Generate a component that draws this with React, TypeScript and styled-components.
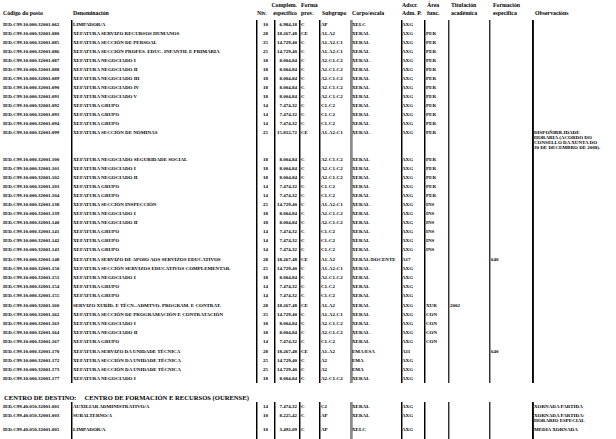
import React from 'react';
import styled, { createGlobalStyle } from 'styled-components';

const GlobalStyle = createGlobalStyle`
    * {
        box-sizing: border-box;
    }
    body {
        margin: 0;
        background: #fff;
        color: #000;
        font-family: 'Liberation Serif', 'Times New Roman', serif;
    }
`;

type Align = 'left' | 'center' | 'right';

// column widths, text alignment and the rule on the left of each column
// (rule: border width, edge: the softer pixel drawn just inside it)
const columns: { width: number; rule: number; colour: string; edge: string; align: Align; pad: string }[] = [
    { width: 71, rule: 0, colour: '#000', edge: 'transparent', align: 'left', pad: '0 0 0 3px' },
    { width: 185, rule: 1, colour: '#000', edge: '#8a8a8a', align: 'left', pad: '0 0 0 1px' },
    { width: 18, rule: 1, colour: '#000', edge: '#8a8a8a', align: 'center', pad: '0' },
    { width: 25, rule: 1, colour: '#000', edge: '#8a8a8a', align: 'right', pad: '0 2px 0 0' },
    { width: 20, rule: 1, colour: '#000', edge: '#8a8a8a', align: 'left', pad: '0 0 0 1px' },
    { width: 31, rule: 1, colour: '#000', edge: '#8a8a8a', align: 'left', pad: '0 0 0 1px' },
    { width: 51, rule: 2, colour: '#8c8c8c', edge: '#a8a8a8', align: 'left', pad: '0 0 0 0' },
    { width: 23, rule: 1, colour: '#000', edge: '#8a8a8a', align: 'left', pad: '0 0 0 0' },
    { width: 24, rule: 1, colour: '#000', edge: '#8a8a8a', align: 'left', pad: '0 0 0 1px' },
    { width: 41, rule: 1, colour: '#333', edge: '#a0a0a0', align: 'left', pad: '0 0 0 1px' },
    { width: 43, rule: 1, colour: '#333', edge: '#a0a0a0', align: 'left', pad: '0 0 0 1px' },
    { width: 84, rule: 1, colour: '#000', edge: '#222', align: 'left', pad: '0 0 0 1px' },
];

const COLUMNS = columns.map((column) => `${column.width}px`).join(' ');

const Page = styled.div`
    width: 616px;
    height: 439px;
    overflow: hidden;
`;

const HeaderRow = styled.div`
    display: grid;
    grid-template-columns: ${COLUMNS};
    height: 20px;
`;

const HeadCell = styled.div<{ $pad: string; $align: Align }>`
    display: flex;
    flex-direction: column;
    justify-content: flex-end;
    align-items: ${(props) => (props.$align === 'right' ? 'flex-end' : 'flex-start')};
    padding: ${(props) => props.$pad};
    padding-bottom: 3px;
    font-size: 5.8px;
    font-weight: bold;
    line-height: 8px;
    white-space: nowrap;
`;

const Row = styled.div<{ $height: number }>`
    display: grid;
    grid-template-columns: ${COLUMNS};
    height: ${(props) => props.$height}px;
`;

const Cell = styled.div<{ $rule: number; $colour: string; $edge: string; $align: Align; $pad: string }>`
    border-left: ${(props) => (props.$rule ? `${props.$rule}px solid ${props.$colour}` : 'none')};
    box-shadow: ${(props) => (props.$rule ? `inset 1px 0 0 ${props.$edge}` : 'none')};
    text-align: ${(props) => props.$align};
    padding: ${(props) => props.$pad};
    padding-top: 2px;
    font-size: 5px;
    font-weight: bold;
    line-height: 5px;
    white-space: nowrap;
`;

const CentreTitle = styled.div`
    height: 19px;
    padding: 10px 0 0 4px;
    display: flex;
    gap: 8px;
    font-size: 6.6px;
    font-weight: bold;
    line-height: 9px;
    white-space: nowrap;
`;

const heads: string[][] = [
    ['Código do posto'],
    ['Denominación'],
    ['Niv.'],
    ['Complem.', 'específico'],
    ['Forma', 'prov.'],
    ['Subgrupo'],
    ['Corpo/escala'],
    ['Adscr.', 'Adm. P.'],
    ['Área', 'func.'],
    ['Titulación', 'académica'],
    ['Formación', 'específica'],
    ['Observacións'],
];

const headPads = [
    '0 0 0 3px',
    '0 0 0 2px',
    '0 0 0 1px',
    '0 2px 0 0',
    '0 0 0 2px',
    '0 0 0 3px',
    '0 0 0 2px',
    '0 0 0 1px',
    '0 0 0 3px',
    '0 0 0 3px',
    '0 0 0 4px',
    '0 0 0 3px',
];

type Post = {
    id: string;
    name: string;
    level: string;
    amount: string;
    form: string;
    group: string;
    body: string;
    assign: string;
    area?: string;
    degree?: string;
    training?: string;
    notes?: string[];
    height?: number;
};

const post = (
    id: string,
    name: string,
    level: string,
    amount: string,
    form: string,
    group: string,
    body: string,
    assign: string,
    area = '',
    extra: Partial<Post> = {}
): Post => ({ id, name, level, amount, form, group, body, assign, area, ...extra });

const PREFIX_A = 'IED.C99.10.000.32001.';
const PREFIX_B = 'IED.C99.40.050.32001.';

const NEG_I = 'XEFATURA NEGOCIADO I';
const NEG_II = 'XEFATURA NEGOCIADO II';
const GRUPO = 'XEFATURA GRUPO';

const firstCentre: Post[] = [
    post('062', 'LIMPADOR/A', '10', '6.984,18', 'C', 'AP', 'XELC', 'AXG'),
    post('080', 'XEFATURA SERVIZO RECURSOS HUMANOS', '28', '18.267,48', 'CE', 'A1-A2', 'XERAL', 'AXG', 'PER'),
    post('085', 'XEFATURA SECCIÓN DE PERSOAL', '25', '14.729,40', 'C', 'A1-A2-C1', 'XERAL', 'AXG', 'PER'),
    post('086', 'XEFATURA SECCIÓN PROFES. EDUC. INFANTIL E PRIMARIA', '25', '14.729,40', 'C', 'A1-A2-C1', 'XERAL', 'AXG', 'PER'),
    post('087', NEG_I, '18', '8.004,84', 'C', 'A2-C1-C2', 'XERAL', 'AXG', 'PER'),
    post('088', NEG_II, '18', '8.004,84', 'C', 'A2-C1-C2', 'XERAL', 'AXG', 'PER'),
    post('089', 'XEFATURA NEGOCIADO III', '18', '8.004,84', 'C', 'A2-C1-C2', 'XERAL', 'AXG', 'PER'),
    post('090', 'XEFATURA NEGOCIADO IV', '18', '8.004,84', 'C', 'A2-C1-C2', 'XERAL', 'AXG', 'PER'),
    post('091', 'XEFATURA NEGOCIADO V', '18', '8.004,84', 'C', 'A2-C1-C2', 'XERAL', 'AXG', 'PER'),
    post('092', GRUPO, '14', '7.474,32', 'C', 'C1-C2', 'XERAL', 'AXG', 'PER'),
    post('093', GRUPO, '14', '7.474,32', 'C', 'C1-C2', 'XERAL', 'AXG', 'PER'),
    post('094', GRUPO, '14', '7.474,32', 'C', 'C1-C2', 'XERAL', 'AXG', 'PER'),
    post('099', 'XEFATURA SECCIÓN DE NÓMINAS', '25', '15.812,72', 'CE', 'A1-A2-C1', 'XERAL', 'AXG', 'PER', {
        notes: ['DISPOÑIBILIDADE', 'HORARIA (ACORDO DO', 'CONSELLO DA XUNTA DO', '30 DE DECEMBRO DE 2008).'],
        height: 27,
    }),
    post('100', 'XEFATURA NEGOCIADO SEGURIDADE SOCIAL', '18', '8.004,84', 'C', 'A2-C1-C2', 'XERAL', 'AXG', 'PER'),
    post('101', NEG_I, '18', '8.004,84', 'C', 'A2-C1-C2', 'XERAL', 'AXG', 'PER'),
    post('102', NEG_II, '18', '8.004,84', 'C', 'A2-C1-C2', 'XERAL', 'AXG', 'PER'),
    post('103', GRUPO, '14', '7.474,32', 'C', 'C1-C2', 'XERAL', 'AXG', 'PER'),
    post('104', GRUPO, '14', '7.474,32', 'C', 'C1-C2', 'XERAL', 'AXG', 'PER'),
    post('138', 'XEFATURA SECCIÓN INSPECCIÓN', '25', '14.729,40', 'C', 'A1-A2-C1', 'XERAL', 'AXG', 'INS'),
    post('139', NEG_I, '18', '8.004,84', 'C', 'A2-C1-C2', 'XERAL', 'AXG', 'INS'),
    post('140', NEG_II, '18', '8.004,84', 'C', 'A2-C1-C2', 'XERAL', 'AXG', 'INS'),
    post('141', GRUPO, '14', '7.474,32', 'C', 'C1-C2', 'XERAL', 'AXG', 'INS'),
    post('142', GRUPO, '14', '7.474,32', 'C', 'C1-C2', 'XERAL', 'AXG', 'INS'),
    post('143', GRUPO, '14', '7.474,32', 'C', 'C1-C2', 'XERAL', 'AXG', 'INS', { height: 10 }),
    post('148', 'XEFATURA SERVIZO DE APOIO AOS SERVIZOS EDUCATIVOS', '28', '18.267,48', 'CE', 'A1-A2', 'XERAL/DOCENTE', 'A17', '', {
        training: '640',
    }),
    post('150', 'XEFATURA SECCIÓN SERVIZOS EDUCATIVOS COMPLEMENTAR.', '25', '14.729,40', 'C', 'A1-A2-C1', 'XERAL', 'AXG'),
    post('151', NEG_I, '18', '8.004,84', 'C', 'A2-C1-C2', 'XERAL', 'AXG'),
    post('154', GRUPO, '14', '7.474,32', 'C', 'C1-C2', 'XERAL', 'AXG'),
    post('155', GRUPO, '14', '7.474,32', 'C', 'C1-C2', 'XERAL', 'AXG', '', { height: 10 }),
    post('160', 'SERVIZO XURÍD. E TÉCN.-ADMTVO. PROGRAM. E CONTRAT.', '28', '18.267,48', 'CE', 'A1-A2', 'XERAL', 'AXG', 'XUR', {
        degree: '2002',
    }),
    post('162', 'XEFATURA SECCIÓN DE PROGRAMACIÓN E CONTRATACIÓN', '25', '14.729,40', 'C', 'A1-A2-C1', 'XERAL', 'AXG', 'CON'),
    post('163', NEG_I, '18', '8.004,84', 'C', 'A2-C1-C2', 'XERAL', 'AXG', 'CON'),
    post('164', NEG_II, '18', '8.004,84', 'C', 'A2-C1-C2', 'XERAL', 'AXG', 'CON'),
    post('167', GRUPO, '14', '7.474,32', 'C', 'C1-C2', 'XERAL', 'AXG', 'CON', { height: 10 }),
    post('170', 'XEFATURA SERVIZO DA UNIDADE TÉCNICA', '28', '18.267,48', 'CE', 'A1-A2', 'EMA/ESA', 'A11', '', { training: '640' }),
    post('172', 'XEFATURA SECCIÓN DA UNIDADE TÉCNICA', '25', '14.729,40', 'C', 'A2', 'EMA', 'AXG'),
    post('173', 'XEFATURA SECCIÓN DA UNIDADE TÉCNICA', '25', '14.729,40', 'C', 'A2', 'EMA', 'AXG'),
    post('177', NEG_I, '18', '8.004,84', 'C', 'A2-C1-C2', 'XERAL', 'AXG'),
];

const secondCentre: Post[] = [
    post('001', 'AUXILIAR ADMINISTRATIVO/A', '14', '7.474,32', 'C', 'C2', 'XERAL', 'AXG', '', { notes: ['XORNADA PARTIDA'] }),
    post('003', 'SUBALTERNO/A', '10', '8.225,42', 'C', 'AP', 'XERAL', 'AXG', '', {
        notes: ['XORNADA PARTIDA/', 'HORARIO ESPECIAL'],
        height: 14,
    }),
    post('005', 'LIMPADOR/A', '10', '3.492,09', 'C', 'AP', 'XELC', 'AXG', '', { notes: ['MEDIA XORNADA'], height: 16 }),
];

const PostRow = ({ item, prefix }: { item: Post; prefix: string }) => {
    const values: React.ReactNode[] = [
        prefix + item.id,
        item.name,
        item.level,
        item.amount,
        item.form,
        item.group,
        item.body,
        item.assign,
        item.area,
        item.degree,
        item.training,
        item.notes?.map((line, index) => <div key={index}>{line}</div>),
    ];
    return (
        <Row $height={item.height ?? 9}>
            {values.map((value, index) => (
                <Cell
                    key={index}
                    $rule={columns[index].rule}
                    $colour={columns[index].colour}
                    $edge={columns[index].edge}
                    $align={columns[index].align}
                    $pad={columns[index].pad}
                >
                    {value}
                </Cell>
            ))}
        </Row>
    );
};

const App = () => {
    return (
        <Page>
            <GlobalStyle />
            <HeaderRow>
                {heads.map((lines, index) => (
                    <HeadCell key={index} $pad={headPads[index]} $align={index === 3 ? 'right' : 'left'}>
                        {lines.map((line) => (
                            <span key={line}>{line}</span>
                        ))}
                    </HeadCell>
                ))}
            </HeaderRow>
            {firstCentre.map((item) => (
                <PostRow key={item.id} item={item} prefix={PREFIX_A} />
            ))}
            <CentreTitle>
                <span>CENTRO DE DESTINO:</span>
                <span>CENTRO DE FORMACIÓN E RECURSOS (OURENSE)</span>
            </CentreTitle>
            {secondCentre.map((item) => (
                <PostRow key={item.id} item={item} prefix={PREFIX_B} />
            ))}
        </Page>
    );
};

export default App;
